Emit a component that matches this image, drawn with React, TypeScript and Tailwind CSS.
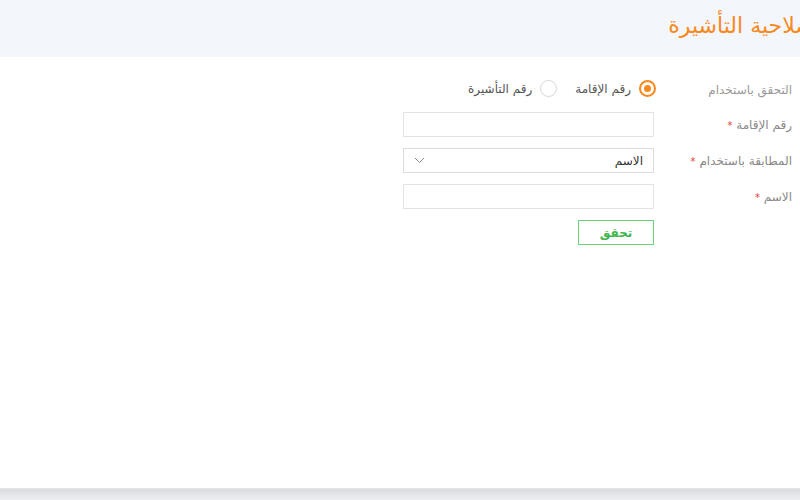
import { useState } from "react";

function Radio({ checked, label, onClick }: { checked: boolean; label: string; onClick: () => void }) {
  return (
    <button type="button" onClick={onClick} className="flex items-center gap-[8px]">
      <span
        className={
          "flex h-[17px] w-[17px] items-center justify-center rounded-full " +
          (checked ? "border-2 border-[#f7891f]" : "border border-[#d6d6d6]")
        }
      >
        {checked && <span className="h-[7px] w-[7px] rounded-full bg-[#f7891f]" />}
      </span>
      <span className="text-[12px] text-[#555]">{label}</span>
    </button>
  );
}

function Star() {
  return <span className="align-middle text-[10px] text-[#e53935]">*</span>;
}

export default function App() {
  const [mode, setMode] = useState<"iqama" | "visa">("iqama");

  return (
    <div
      dir="rtl"
      className="flex h-[500px] w-[800px] flex-col overflow-hidden bg-white"
      style={{ fontFamily: '"DejaVu Sans", "Noto Sans", sans-serif' }}
    >
      <div className="flex h-[57px] shrink-0 items-center bg-[#f3f6fa] pb-[6px]">
        <h1 className="-mr-[14px] whitespace-nowrap text-[22px] text-[#f7891f]">صلاحية التأشيرة</h1>
      </div>

      <div className="flex flex-1 flex-col gap-[11px] pr-[8px] pt-[19px]">
        <div className="flex h-[25px] items-center">
          <label className="w-[138px] pt-[2px] text-[12px] text-[#999]">التحقق باستخدام</label>
          <div className="-mr-[2px] flex items-center gap-[18px]">
            <Radio checked={mode === "iqama"} label="رقم الإقامة" onClick={() => setMode("iqama")} />
            <Radio checked={mode === "visa"} label="رقم التأشيرة" onClick={() => setMode("visa")} />
          </div>
        </div>

        <div className="flex h-[25px] items-center">
          <label className="w-[138px] text-[12px] text-[#888]">
            رقم الإقامة <Star />
          </label>
          <input className="h-[25px] w-[251px] border border-[#e3e3e3] px-2 text-[12px] outline-none" />
        </div>

        <div className="flex h-[25px] items-center">
          <label className="w-[138px] text-[12px] text-[#888]">
            المطابقة باستخدام <Star />
          </label>
          <div className="flex h-[25px] w-[251px] items-center justify-between border border-[#dcdcdc] px-[10px]">
            <span className="text-[12px] text-[#333]">الاسم</span>
            <svg width="11" height="7" viewBox="0 0 11 7" fill="none" stroke="#888" strokeWidth="1">
              <path d="M1 1l4.5 4.5L10 1" />
            </svg>
          </div>
        </div>

        <div className="flex h-[25px] items-center">
          <label className="w-[138px] text-[12px] text-[#888]">
            الاسم <Star />
          </label>
          <input className="h-[25px] w-[251px] border border-[#e3e3e3] px-2 text-[12px] outline-none" />
        </div>

        <div className="flex h-[25px] items-center">
          <div className="w-[138px]" />
          <button className="h-[25px] w-[76px] border border-[#6cd37a] text-[12px] font-bold text-[#3db74c]">
            تحقق
          </button>
        </div>
      </div>

      <div className="h-[12px] shrink-0 border-t border-[#e2e4e8] bg-gradient-to-b from-[#d9dbe0] to-[#eceef2]" />
    </div>
  );
}
